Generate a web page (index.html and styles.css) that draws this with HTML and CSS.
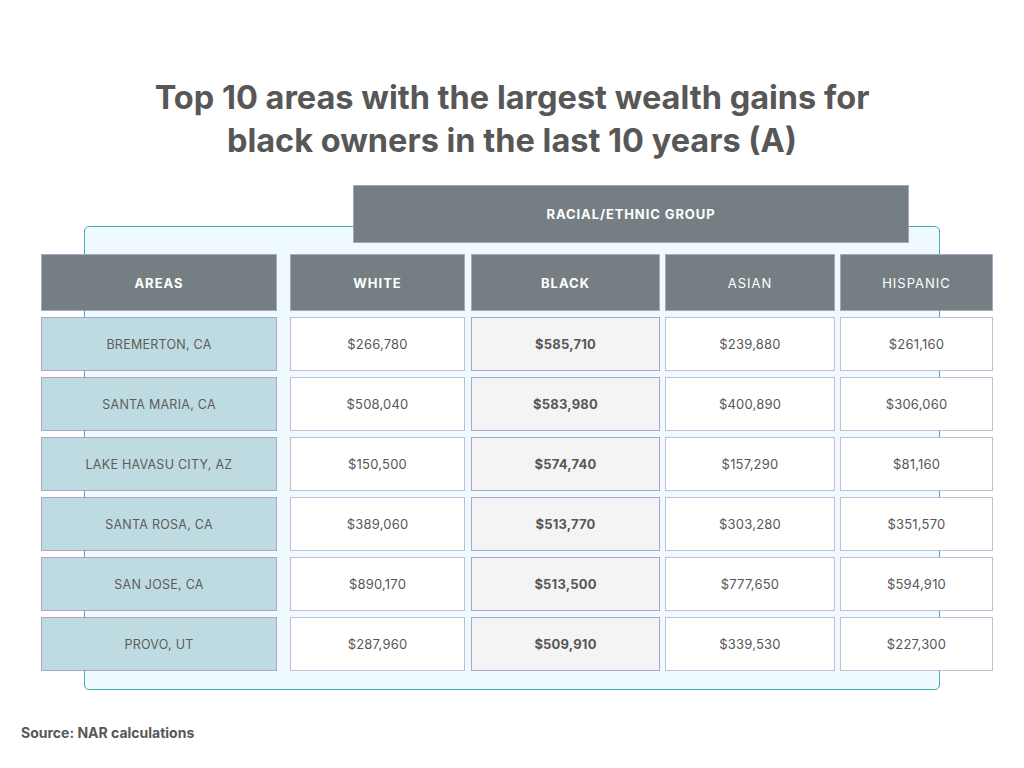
FILE: index.html
```html
<!DOCTYPE html>
<html lang="en">
<head>
<meta charset="utf-8">
<title>Top 10 areas with the largest wealth gains for black owners</title>
<link rel="stylesheet" href="styles.css">
</head>
<body>
<main class="page">
  <h1 class="title">Top 10 areas with the largest wealth gains for<br>black owners in the last 10 years (A)</h1>
  <section class="table-wrap">
    <div class="panel"></div>
    <div class="group-head">RACIAL/ETHNIC GROUP</div>
    <div class="grid">
      <div class="cell head col-area">AREAS</div>
      <div class="cell head col-white">WHITE</div>
      <div class="cell head">BLACK</div>
      <div class="cell head light">ASIAN</div>
      <div class="cell head light">HISPANIC</div>

      <div class="cell area col-area">BREMERTON, CA</div>
      <div class="cell val col-white">$266,780</div>
      <div class="cell val black">$585,710</div>
      <div class="cell val">$239,880</div>
      <div class="cell val">$261,160</div>

      <div class="cell area col-area">SANTA MARIA, CA</div>
      <div class="cell val col-white">$508,040</div>
      <div class="cell val black">$583,980</div>
      <div class="cell val">$400,890</div>
      <div class="cell val">$306,060</div>

      <div class="cell area col-area">LAKE HAVASU CITY, AZ</div>
      <div class="cell val col-white">$150,500</div>
      <div class="cell val black">$574,740</div>
      <div class="cell val">$157,290</div>
      <div class="cell val">$81,160</div>

      <div class="cell area col-area">SANTA ROSA, CA</div>
      <div class="cell val col-white">$389,060</div>
      <div class="cell val black">$513,770</div>
      <div class="cell val">$303,280</div>
      <div class="cell val">$351,570</div>

      <div class="cell area col-area">SAN JOSE, CA</div>
      <div class="cell val col-white">$890,170</div>
      <div class="cell val black">$513,500</div>
      <div class="cell val">$777,650</div>
      <div class="cell val">$594,910</div>

      <div class="cell area col-area">PROVO, UT</div>
      <div class="cell val col-white">$287,960</div>
      <div class="cell val black">$509,910</div>
      <div class="cell val">$339,530</div>
      <div class="cell val">$227,300</div>
    </div>
  </section>
  <p class="source">Source: NAR calculations</p>
</main>
</body>
</html>
```
FILE: styles.css
```css
* { box-sizing: border-box; }
html, body { margin: 0; padding: 0; background: #ffffff; }
body {
  font-family: Inter, "Noto Sans", "Liberation Sans", sans-serif;
  color: #575757;
  width: 1024px;
  height: 768px;
  overflow: hidden;
}
.page { padding-top: 76px; }
.title {
  margin: 0;
  text-align: center;
  font-size: 32.5px;
  line-height: 43px;
  font-weight: 700;
  color: #575757;
  letter-spacing: 0;
}
.table-wrap {
  position: relative;
  margin-top: 23px;
  padding-left: 41px;
}
.panel {
  position: absolute;
  left: 84px;
  top: 41px;
  width: 856px;
  height: 464px;
  background: #effafe;
  border: 1px solid #45adad;
  border-radius: 5px;
}
.group-head {
  position: relative;
  margin-left: 312px;
  width: 556px;
  height: 58px;
  display: flex;
  align-items: center;
  justify-content: center;
  background: #757e82;
  border: 1px solid #a9a2c3;
  color: #ffffff;
  font-size: 13px;
  font-weight: 700;
  letter-spacing: 0.9px;
}
.grid {
  position: relative;
  margin-top: 11px;
  display: grid;
  grid-template-columns: 244px 176px 189px 170px 153px;
  grid-template-rows: 57px repeat(6, 54px);
  column-gap: 5px;
  row-gap: 6px;
}
.cell {
  display: flex;
  align-items: center;
  justify-content: center;
  border: 1px solid #aea5c6;
  font-size: 13px;
}
.col-area { width: 236px; }
.col-white { width: 175px; }
.head {
  background: #757e82;
  color: #ffffff;
  font-weight: 700;
  letter-spacing: 1px;
}
.head.light { font-weight: 400; }
.area {
  background: #bfdbe2;
  color: #5c5c5c;
  font-size: 12.5px;
  letter-spacing: 0.25px;
}
.val {
  background: #ffffff;
  color: #575757;
  letter-spacing: 0.2px;
  border-color: #c4bcd6;
}
.val.black {
  background: #f4f4f4;
  font-weight: 700;
  border-color: #aea5c6;
}
.source {
  margin: 53px 0 0 21px;
  font-size: 14px;
  font-weight: 700;
  color: #575757;
}
```
